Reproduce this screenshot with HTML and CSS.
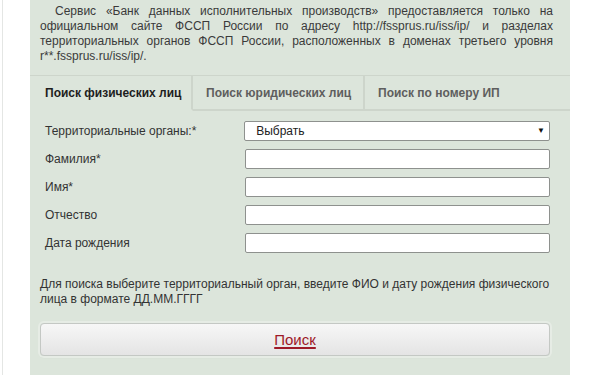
FILE: index.html
```html
<!DOCTYPE html>
<html lang="ru">
<head>
  <meta charset="UTF-8">
  <title>Банк данных исполнительных производств</title>
  <link rel="stylesheet" href="styles.css">
</head>
<body>
  <div class="page">
    <div class="panel">
      <p class="intro">Сервис «Банк данных исполнительных производств» предоставляется только на официальном сайте ФССП России по адресу http://fssprus.ru/iss/ip/ и разделах территориальных органов ФССП России, расположенных в доменах третьего уровня r**.fssprus.ru/iss/ip/.</p>

      <div class="tabs">
        <div class="tab active">Поиск физических лиц</div>
        <div class="tab">Поиск юридических лиц</div>
        <div class="tab last">Поиск по номеру ИП</div>
      </div>

      <form class="form">
        <div class="row">
          <label>Территориальные органы:*</label>
          <div class="select">Выбрать<span class="arrow">▼</span></div>
        </div>
        <div class="row">
          <label>Фамилия*</label>
          <input type="text">
        </div>
        <div class="row">
          <label>Имя*</label>
          <input type="text">
        </div>
        <div class="row">
          <label>Отчество</label>
          <input type="text">
        </div>
        <div class="row">
          <label>Дата рождения</label>
          <input type="text">
        </div>

        <p class="hint">Для поиска выберите территориальный орган, введите ФИО и дату рождения физического лица в формате ДД.ММ.ГГГГ</p>

        <div class="btn"><span>Поиск</span></div>
      </form>
    </div>
  </div>
</body>
</html>
```

FILE: styles.css
```css
html, body { margin: 0; padding: 0; background: #fff; }
body { font-family: "Liberation Sans", Arial, sans-serif; color: #333; }
.page { height: 375px; border-left: 1px solid #e4e6e4; margin-left: 2px; padding-left: 27px; overflow: hidden; }
.panel { width: 540px; height: 375px; background: #dce5db; }
.intro { margin: 0; padding: 4px 17px 0 10px; font-size: 12px; line-height: 15px; text-align: justify; text-indent: 15px; color: #3a3a3a; }
.tabs { display: flex; margin-top: 11px; border-top: 1px solid #cdd5cb; height: 34px; }
.tab { font-size: 12px; font-weight: bold; color: #5e5e5e; line-height: 34px; border-right: 2px solid #cdd5cb; border-bottom: 2px solid #cdd5cb; box-sizing: border-box; height: 35px; }
.tab:nth-child(1) { width: 163px; padding-left: 15px; color: #1e1e1e; border-bottom-color: transparent; }
.tab:nth-child(2) { width: 172px; padding-left: 13px; }
.tab.last { flex: 1; padding-left: 13px; border-right: none; }
.form { padding: 7px 20px 0 15px; }
.row { display: flex; align-items: center; height: 28px; }
.row label { width: 200px; font-size: 12px; color: #333; }
.row input, .select { width: 305px; height: 20px; box-sizing: border-box; border: 1px solid #8e918e; border-radius: 2px; background: #fff; margin: 0; padding: 0 4px; }
.select { width: 307px; font-size: 12px; line-height: 18px; padding-left: 11px; display: flex; justify-content: space-between; color: #222; }
.arrow { font-size: 8px; color: #111; }
.hint { margin: 20px 0 0 -5px; font-size: 12px; line-height: 15px; color: #333; width: 515px; }
.btn { margin: 16px 0 0 -5px; width: 510px; height: 33px; box-sizing: border-box; border: 1px solid #c4c8c4; border-radius: 4px; background: linear-gradient(#f7f7f7, #e4e4e4); box-shadow: 0 0 0 2px #e6ece5, 0 1px 2px rgba(0,0,0,0.15); text-align: center; line-height: 31px; }
.btn span { font-size: 15px; color: #9e1a28; text-decoration: underline; text-decoration-thickness: 2px; text-underline-offset: 2px; }
```
